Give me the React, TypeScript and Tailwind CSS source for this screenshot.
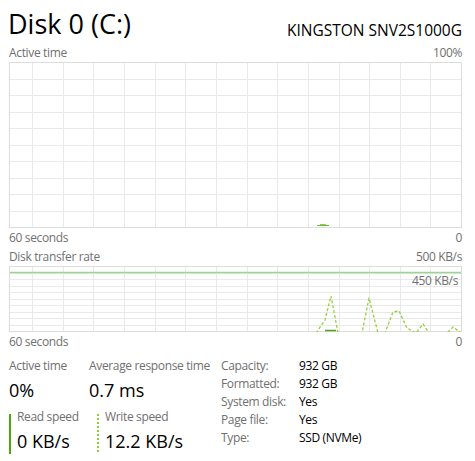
import React from "react"

const vLines = [23, 54, 84, 115, 146, 176, 207, 238, 268, 299, 330, 360, 391, 421]

function Grid({ w, h, rows }: { w: number; h: number; rows: number }) {
  const ys = Array.from({ length: rows - 1 }, (_, i) => ((i + 1) * (h - 1)) / rows)
  return (
    <g>
      {vLines.map((x) => (
        <line key={"v" + x} x1={x + 0.5} y1={0} x2={x + 0.5} y2={h} stroke="#e9e9e9" strokeWidth={1} />
      ))}
      {ys.map((y) => (
        <line key={"h" + y} x1={0} y1={Math.round(y) + 0.5} x2={w} y2={Math.round(y) + 0.5} stroke="#e9e9e9" strokeWidth={1} />
      ))}
      <rect x={0.5} y={0.5} width={w - 1} height={h - 1} fill="none" stroke="#dcdcdc" strokeWidth={1} />
    </g>
  )
}

function ActiveChart() {
  const w = 453
  const h = 166
  return (
    <svg width={w} height={h} className="block">
      <Grid w={w} h={h} rows={10} />
      {/* tiny blip of activity */}
      <rect x={308} y={163} width={12} height={1} fill="#6fb83a" />
      <rect x={311} y={162} width={6} height={1} fill="#8cc868" />
    </svg>
  )
}

function TransferChart() {
  const w = 453
  const h = 66
  const b = 67
  const pts = [
    [307, b], [316, 54], [322, 30], [329, b], [353, b], [360, 32], [369, b], [376, b],
    [384, 46], [390, 45], [398, 62], [407, b], [414, 58], [420, b], [438, b], [444, 61], [452, b],
  ]
  const d = pts.map((p, i) => (i === 0 ? "M" : "L") + " " + p[0] + " " + p[1]).join(" ")
  return (
    <div className="relative">
      <svg width={w} height={h} className="block">
        <Grid w={w} h={h} rows={10} />
        <line x1={1} y1={6.5} x2={w - 1} y2={6.5} stroke="#98d68f" strokeWidth={1.5} />
        <path d={d} fill="none" stroke="#95d03a" strokeWidth={1.3} strokeDasharray="3 2" />
        <line x1={316} y1={64.5} x2={327} y2={64.5} stroke="#4da60c" strokeWidth={1.5} />
      </svg>
      <span className="absolute right-[4px] top-[7px] text-[12px] leading-[16px] tracking-[-0.35px] text-[#707070]">450 KB/s</span>
    </div>
  )
}

function Stat({ label, value }: { label: string; value: string }) {
  return (
    <div className="flex flex-col">
      <span className="text-[12px] leading-[16px] tracking-[-0.35px] text-[#707070]">{label}</span>
      <span className="text-[18px] leading-[24px] text-black mt-[4px]">{value}</span>
    </div>
  )
}

const props = [
  ["Capacity:", "932 GB"],
  ["Formatted:", "932 GB"],
  ["System disk:", "Yes"],
  ["Page file:", "Yes"],
  ["Type:", "SSD (NVMe)"],
]

const label = "flex justify-between text-[12px] leading-[16px] tracking-[-0.35px] text-[#707070]"

export default function App() {
  return (
    <div className="w-[475px] h-[461px] bg-white overflow-hidden font-['Open_Sans',sans-serif] pl-[9px] pr-[13px]">
      <div className="flex items-end justify-between pt-[7px]">
        <span className="text-[27px] leading-[34px] text-black -ml-[1px]">Disk 0 (C:)</span>
        <span className="text-[15.5px] leading-[20px] text-black mb-[1px]">KINGSTON SNV2S1000G</span>
      </div>
      <div className={label + " mt-[4px]"}>
        <span>Active time</span>
        <span>100%</span>
      </div>
      <div className="mt-[1px]">
        <ActiveChart />
      </div>
      <div className={label + " mt-[2px]"}>
        <span>60 seconds</span>
        <span>0</span>
      </div>
      <div className={label + " mt-[3px]"}>
        <span>Disk transfer rate</span>
        <span>500 KB/s</span>
      </div>
      <div className="mt-[1px]">
        <TransferChart />
      </div>
      <div className={label + " mt-[2px]"}>
        <span>60 seconds</span>
        <span>0</span>
      </div>
      <div className="flex mt-[8px]">
        <div className="w-[212px] flex flex-col">
          <div className="flex">
            <div className="w-[80px]">
              <Stat label="Active time" value="0%" />
            </div>
            <Stat label="Average response time" value="0.7 ms" />
          </div>
          <div className="flex mt-[7px]">
            <div className="w-[88px] flex items-start">
              <div className="w-[2px] h-[40px] mt-[5px] bg-[#4da60c]" />
              <div className="pl-[6px]">
                <Stat label="Read speed" value="0 KB/s" />
              </div>
            </div>
            <div className="flex items-start">
              <div className="w-[2px] h-[40px] mt-[5px] bg-[repeating-linear-gradient(to_bottom,#8ccf3a_0px,#8ccf3a_2px,transparent_2px,transparent_4px)]" />
              <div className="pl-[6px]">
                <Stat label="Write speed" value="12.2 KB/s" />
              </div>
            </div>
          </div>
        </div>
        <div className="flex flex-col -mt-[1px]">
          {props.map(([k, v]) => (
            <div key={k} className="flex text-[12px] leading-[18px] tracking-[-0.35px]">
              <span className="w-[78px] text-[#707070]">{k}</span>
              <span className="text-black">{v}</span>
            </div>
          ))}
        </div>
      </div>
    </div>
  )
}
